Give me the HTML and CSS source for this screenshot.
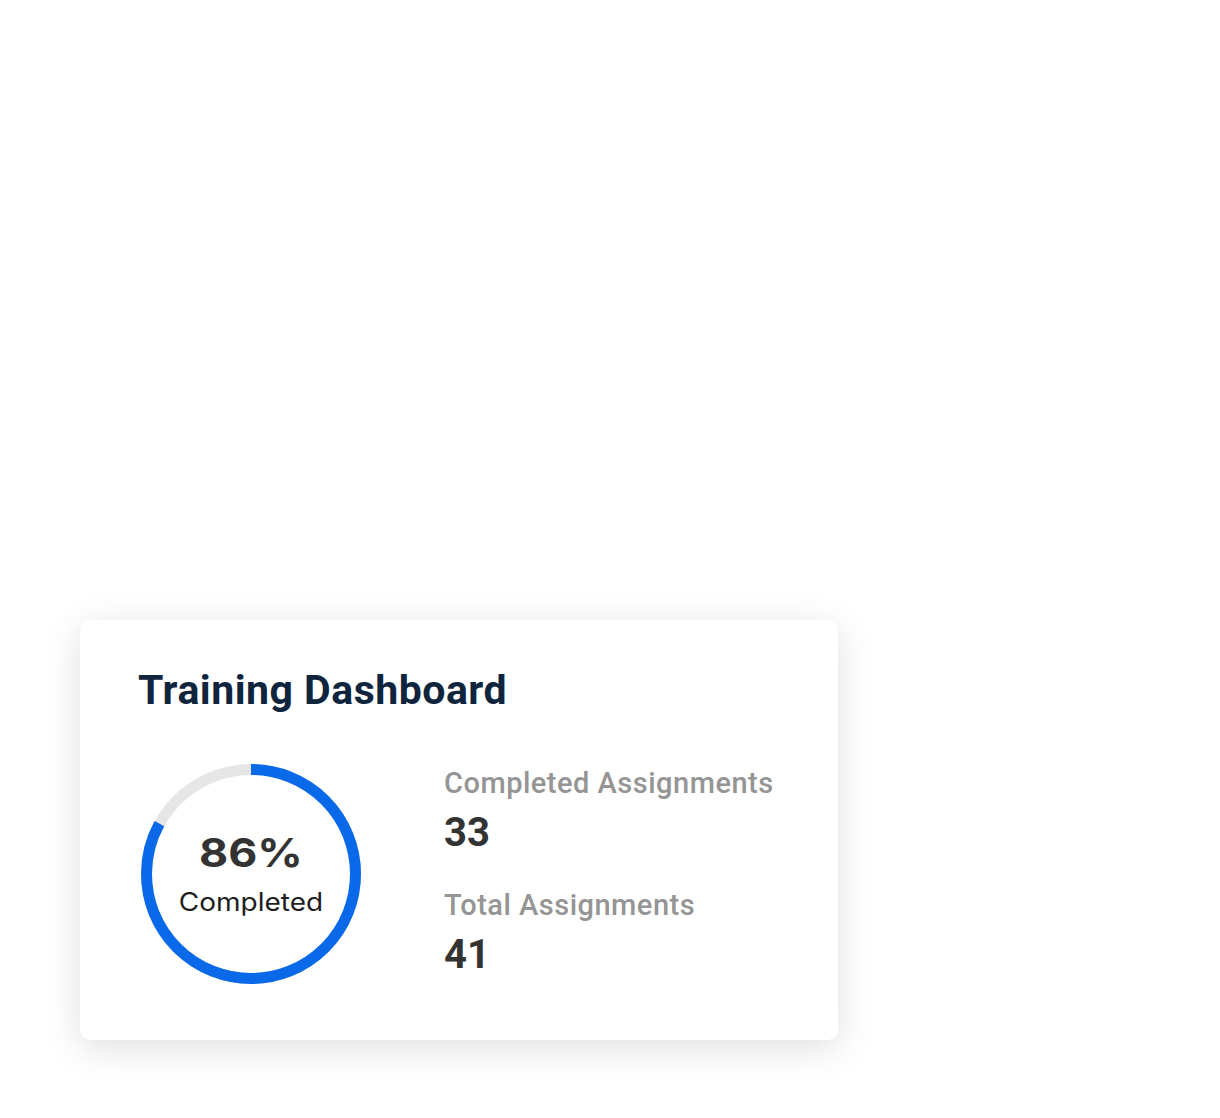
FILE: index.html
```html
<!DOCTYPE html>
<html lang="en">
<head>
<meta charset="utf-8">
<title>Training Dashboard</title>
<link rel="stylesheet" href="styles.css">
</head>
<body>
<main class="stage">
  <section class="card">
    <h2 class="card-title">Training Dashboard</h2>
    <div class="card-body">
      <div class="ring">
        <svg class="ring-svg" viewBox="0 0 220 220" width="220" height="220" aria-hidden="true">
          <circle class="ring-track" cx="110" cy="110" r="104.5"></circle>
          <circle class="ring-value" cx="110" cy="110" r="104.5" pathLength="100" stroke-dasharray="83 100" transform="rotate(-90 110 110)"></circle>
        </svg>
        <div class="ring-label">
          <span class="ring-percent">86%</span>
          <span class="ring-caption">Completed</span>
        </div>
      </div>
      <dl class="stats">
        <div class="stat">
          <dt class="stat-label">Completed Assignments</dt>
          <dd class="stat-value">33</dd>
        </div>
        <div class="stat">
          <dt class="stat-label">Total Assignments</dt>
          <dd class="stat-value">41</dd>
        </div>
      </dl>
    </div>
  </section>
</main>
</body>
</html>
```

FILE: styles.css
```css
html, body {
  margin: 0;
  background: #ffffff;
}

.stage {
  padding: 620px 0 78px 80px;
}

.card {
  width: 758px;
  height: 420px;
  box-sizing: border-box;
  padding: 46px 0 0 58px;
  background: #ffffff;
  border-radius: 10px;
  box-shadow: 0 8px 36px rgba(0, 0, 0, 0.13);
}

.card-title {
  margin: 0;
  font-family: Roboto, "Liberation Sans", sans-serif;
  font-weight: 700;
  font-size: 41px;
  line-height: 48px;
  color: #0f253e;
  letter-spacing: 0.5px;
}

.card-body {
  display: flex;
  align-items: flex-start;
  margin-top: 50px;
}

/* progress ring */
.ring {
  position: relative;
  width: 220px;
  height: 220px;
  margin-left: 3px;
}

.ring-svg {
  display: block;
}

.ring-track,
.ring-value {
  fill: none;
  stroke-width: 11;
}

.ring-track {
  stroke: #e6e6e6;
}

.ring-value {
  stroke: #0a69e8;
}

.ring-label {
  position: absolute;
  inset: 0;
  display: flex;
  flex-direction: column;
  align-items: center;
  justify-content: center;
  gap: 12px;
  transform: scaleX(1.12);
}

.ring-percent {
  font-family: Inter, "Noto Sans", sans-serif;
  font-weight: 700;
  font-size: 40px;
  line-height: 44px;
  color: #333333;
}

.ring-caption {
  font-family: Inter, "Noto Sans", sans-serif;
  font-weight: 400;
  font-size: 25px;
  line-height: 30px;
  color: #1e1e1e;
}

/* figures beside the ring */
.stats {
  margin: 2px 0 0 83px;
  display: flex;
  flex-direction: column;
  gap: 32px;
}

.stat {
  margin: 0;
}

.stat-label {
  font-family: Roboto, "Liberation Sans", sans-serif;
  font-weight: 500;
  font-size: 29px;
  line-height: 34px;
  color: #959595;
  letter-spacing: 0.5px;
}

.stat-value {
  margin: 10px 0 0;
  font-family: Roboto, "Liberation Sans", sans-serif;
  font-weight: 700;
  font-size: 40px;
  line-height: 46px;
  color: #333333;
}
```
